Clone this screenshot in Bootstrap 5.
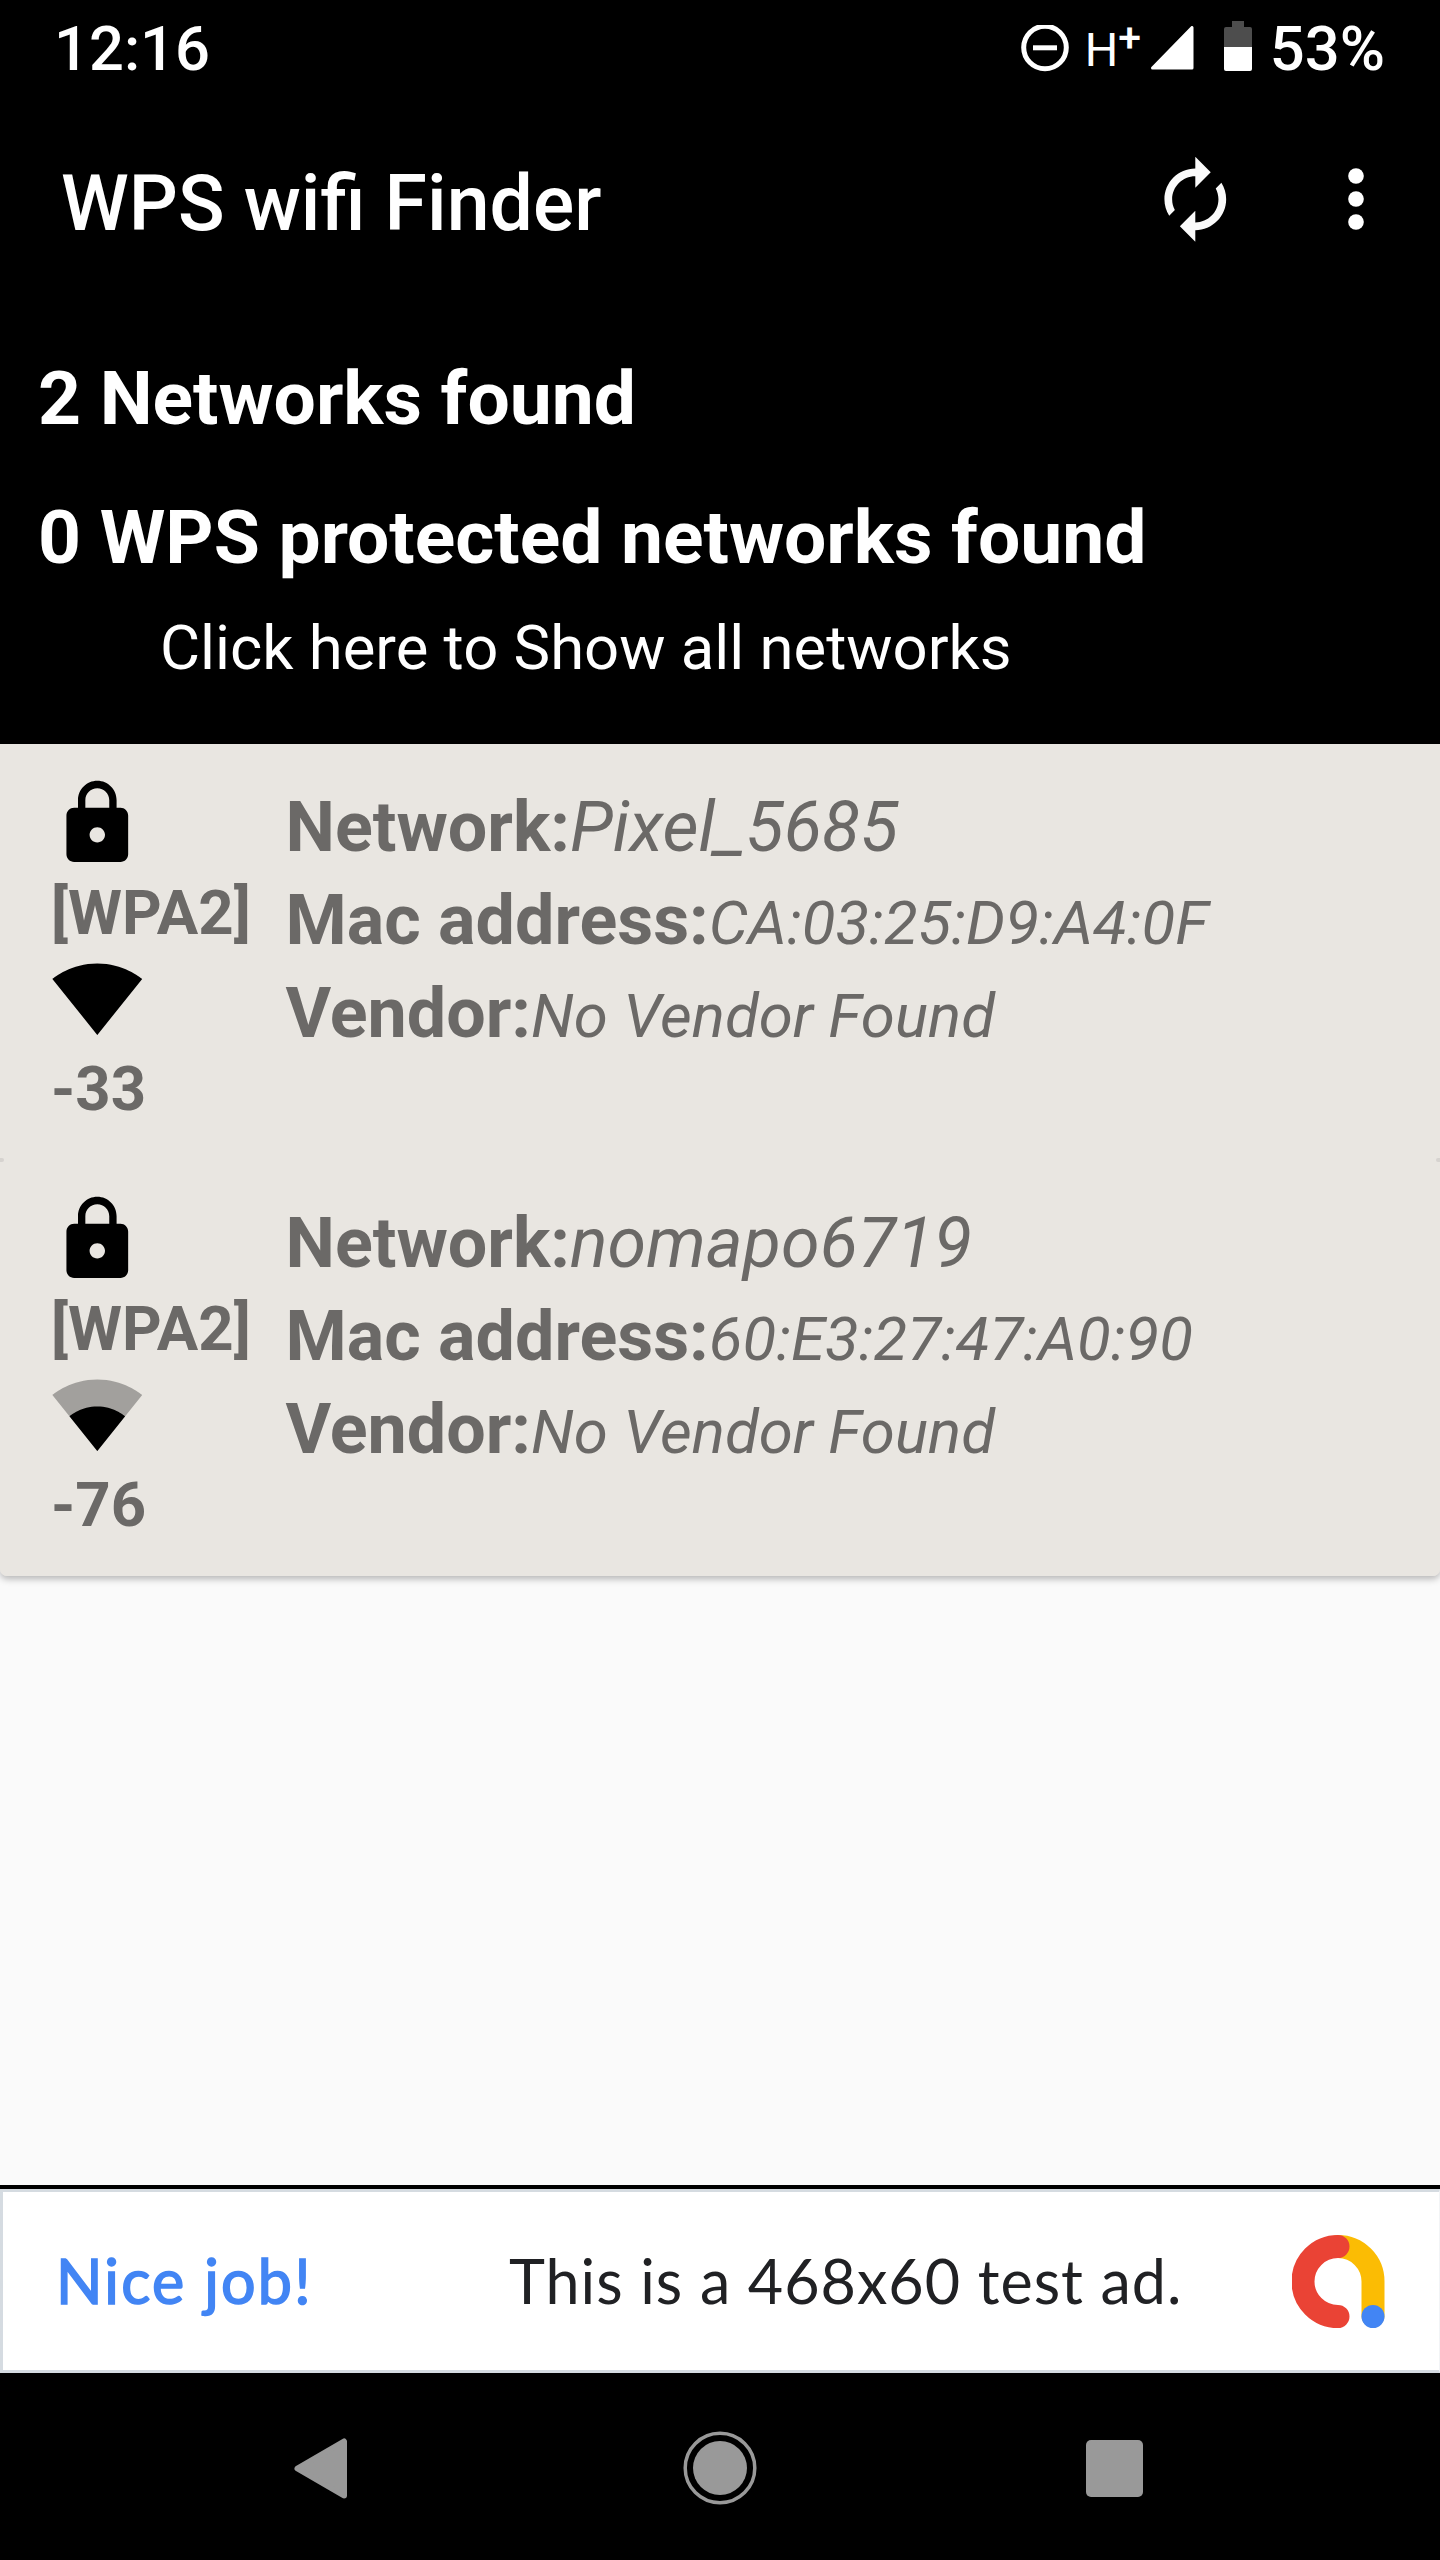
<!DOCTYPE html>
<html lang="en">
<head>
<meta charset="utf-8">
<meta name="viewport" content="width=device-width, initial-scale=1">
<title>WPS wifi Finder</title>
<link rel="stylesheet" href="https://cdn.jsdelivr.net/npm/bootstrap@5.3.0/dist/css/bootstrap.min.css">
<style>
body{font-family:Roboto,"Noto Sans",sans-serif;background:#fafafa;width:1440px;height:2560px;overflow:hidden}
svg{display:block;flex:none}
.statusbar{height:98px;padding:0 55px 0 54px;font-size:61.5px;font-weight:500;line-height:98px}
.net-type{width:49px;margin-left:16px;font-size:47px;font-weight:400;line-height:1;white-space:nowrap}
.net-type sup{font-size:41px;font-weight:500;line-height:0;top:-.32em;margin-left:0}
.battery{margin-left:29px}
.battery-text{margin-left:18px}
.toolbar{height:202px;padding:0 62px 0 61px}
.toolbar h1{font-size:77px;font-weight:500;line-height:90px;margin:9px 0 0}
.more-icon{margin-left:99px;margin-right:7px}
.summary{height:444px;padding:29px 40px 0 38px}
.summary h2{font-size:75px;font-weight:700;line-height:139px;margin:0}
.summary a{font-size:61.6px;line-height:82px;padding-left:122px}
.net-list{background:#e9e6e1;border-radius:0 0 7px 7px;box-shadow:0 3px 7px rgba(0,0,0,.28)}
.net-card{height:416px;border:0;border-radius:7px;background:#e9e6e1;color:#6b6967}
.net-card + .net-card::before,.net-card + .net-card::after{content:"";position:absolute;top:-2px;width:4px;height:4px;background:#d6d3cf;border-radius:0 50% 50% 0}
.net-card + .net-card::before{left:0}
.net-card + .net-card::after{right:0;transform:scaleX(-1)}
.icon-col{width:237.5px;padding:33px 0 0 3px;font-size:61.7px;font-weight:700;line-height:76px}
.icon-col svg{width:92.6px;height:92.6px}
.icon-col span{display:block;white-space:nowrap;padding-top:5.5px;height:82px}
.icon-col span:last-child{padding-top:6.5px}
.info-col{padding-top:36.5px;font-size:70px;font-weight:700;line-height:93px}
.info-col div{height:93px;white-space:nowrap}
.info-col em{font-weight:400;line-height:1}
.info-col .val-sm{font-size:61.8px}
.ad-wrap{border-top:4px solid #000;background:#fff}
.ad-box{height:184px;border:3px solid #d5dbe1;border-right:1px solid #f2f4f6;padding:0 54px 0 53px;font-family:Lato,sans-serif;font-size:61px;line-height:80px;white-space:nowrap}
.ad-cta{color:#4285f4;width:453px;letter-spacing:2.2px;-webkit-text-stroke:1.6px #4285f4}
.ad-copy{color:#202124;letter-spacing:1px}
.navkeys{height:187px}
</style>
</head>
<body class="d-flex flex-column">
<header class="bg-black text-white">
  <div class="statusbar d-flex align-items-center">
    <span class="me-auto">12:16</span>
    <svg width="48" height="48" viewBox="0 0 48 48"><circle cx="24" cy="22" r="21.300" fill="none" stroke="#fff" stroke-width="5" transform="translate(0 .5)"/><path d="M12 22.800h24" stroke="#fff" stroke-width="5"/></svg>
    <span class="net-type">H<sup>+</sup></span>
    <svg class="ms-3" width="45" height="47" viewBox="0 0 45 47"><path d="M42 1.500V42H2.500z" fill="#fff" stroke="#fff" stroke-width="3" stroke-linejoin="round"/></svg>
    <svg class="battery" width="28" height="56" viewBox="0 0 28 56"><path d="M8 0h12v6h6q2 0 2 2v18H0V8q0-2 2-2h6z" fill="#4d4d4d"/><path d="M0 26h28v22q0 2-2 2H2q-2 0-2-2z" fill="#fff"/></svg>
    <span class="battery-text">53%</span>
  </div>
  <div class="toolbar d-flex align-items-center">
    <h1 class="me-auto">WPS wifi Finder</h1>
    <svg width="92.6" height="92.6" viewBox="0 0 24 24" fill="#fafafa"><path d="M12 6v3l4-4-4-4v3c-4.420 0-8 3.580-8 8 0 1.570.46 3.030 1.240 4.260L6.700 14.800c-.45-.83-.7-1.790-.7-2.800 0-3.310 2.690-6 6-6zm6.760 1.740L17.300 9.200c.44.84.7 1.790.7 2.800 0 3.310-2.690 6-6 6v-3l-4 4 4 4v-3c4.420 0 8-3.580 8-8 0-1.570-.46-3.030-1.240-4.260z"/></svg>
    <svg class="more-icon" width="30" height="80" viewBox="-15 -40 30 80" fill="#fff"><circle cy="-23" r="7.800"/><circle r="7.800"/><circle cy="23" r="7.800"/></svg>
  </div>
  <div class="summary">
    <h2>2 Networks found</h2>
    <h2>0 WPS protected networks found</h2>
    <a class="d-block text-white text-decoration-none">Click here to Show all networks</a>
  </div>
</header>
<main class="flex-grow-1">
  <div class="net-list">
    <article class="card net-card flex-row">
      <div class="icon-col ms-5">
        <svg viewBox="0 0 24 24"><path d="M18 8h-1V6c0-2.760-2.240-5-5-5S7 3.240 7 6v2H6c-1.100 0-2 .9-2 2v10c0 1.100.9 2 2 2h12c1.100 0 2-.9 2-2V10c0-1.100-.9-2-2-2zm-6 9c-1.100 0-2-.9-2-2s.9-2 2-2 2 .9 2 2-.9 2-2 2zm3.100-9H8.900V6c0-1.710 1.390-3.100 3.100-3.100s3.100 1.390 3.100 3.100v2z"/></svg>
        <span>[WPA2]</span>
        <svg viewBox="0 0 24 24"><path d="M12.010 21.490L23.640 7c-.45-.34-4.930-4-11.640-4C5.280 3 .81 6.660.36 7l11.630 14.490.01.01z"/></svg>
        <span>-33</span>
      </div>
      <div class="info-col">
        <div>Network:<em>Pixel_5685</em></div>
        <div>Mac address:<em class="val-sm">CA:03:25:D9:A4:0F</em></div>
        <div>Vendor:<em class="val-sm">No Vendor Found</em></div>
      </div>
    </article>
    <article class="card net-card flex-row">
      <div class="icon-col ms-5">
        <svg viewBox="0 0 24 24"><path d="M18 8h-1V6c0-2.760-2.240-5-5-5S7 3.240 7 6v2H6c-1.100 0-2 .9-2 2v10c0 1.100.9 2 2 2h12c1.100 0 2-.9 2-2V10c0-1.100-.9-2-2-2zm-6 9c-1.100 0-2-.9-2-2s.9-2 2-2 2 .9 2 2-.9 2-2 2zm3.100-9H8.900V6c0-1.710 1.390-3.100 3.100-3.100s3.100 1.390 3.100 3.100v2z"/></svg>
        <span>[WPA2]</span>
        <svg viewBox="0 0 24 24"><path fill-opacity=".3" d="M12.010 21.490L23.640 7c-.45-.34-4.930-4-11.640-4C5.280 3 .81 6.660.36 7l11.630 14.490.01.01z"/><path d="M4.790 12.520l7.200 8.980H12l.01-.01 7.200-8.980C18.850 12.240 16.100 10 12 10s-6.850 2.240-7.210 2.520z"/></svg>
        <span>-76</span>
      </div>
      <div class="info-col">
        <div>Network:<em>nomapo6719</em></div>
        <div>Mac address:<em class="val-sm">60:E3:27:47:A0:90</em></div>
        <div>Vendor:<em class="val-sm">No Vendor Found</em></div>
      </div>
    </article>
  </div>
</main>
<section class="ad-wrap">
  <div class="ad-box d-flex align-items-center">
    <span class="ad-cta">Nice job!</span>
    <span class="ad-copy me-auto">This is a 468x60 test ad.</span>
    <svg width="93" height="93" viewBox="0 0 93 93" fill="none" stroke-width="23" stroke-linecap="round"><path d="M46 11.500A35 35 0 0 1 81 46.500V81" stroke="#fbbc04"/><path d="M46 11.500a35 35 0 0 0 0 70" stroke="#ea4335"/><circle cx="81" cy="81.500" r="11.500" fill="#4285f4"/></svg>
  </div>
</section>
<footer class="navkeys bg-black">
  <svg width="1440" height="187" viewBox="0 2373 1440 187" fill="#999"><path d="M297.500 2468.500L344 2441.500v54z" stroke="#999" stroke-width="6" stroke-linejoin="round"/><circle cx="720" cy="2468" r="27"/><circle cx="720" cy="2468" r="34.800" fill="none" stroke="#999" stroke-width="3.500"/><rect x="1086" y="2440" width="57" height="57" rx="5"/></svg>
</footer>
<script src="https://cdn.jsdelivr.net/npm/bootstrap@5.3.0/dist/js/bootstrap.bundle.min.js"></script>
</body>
</html>
